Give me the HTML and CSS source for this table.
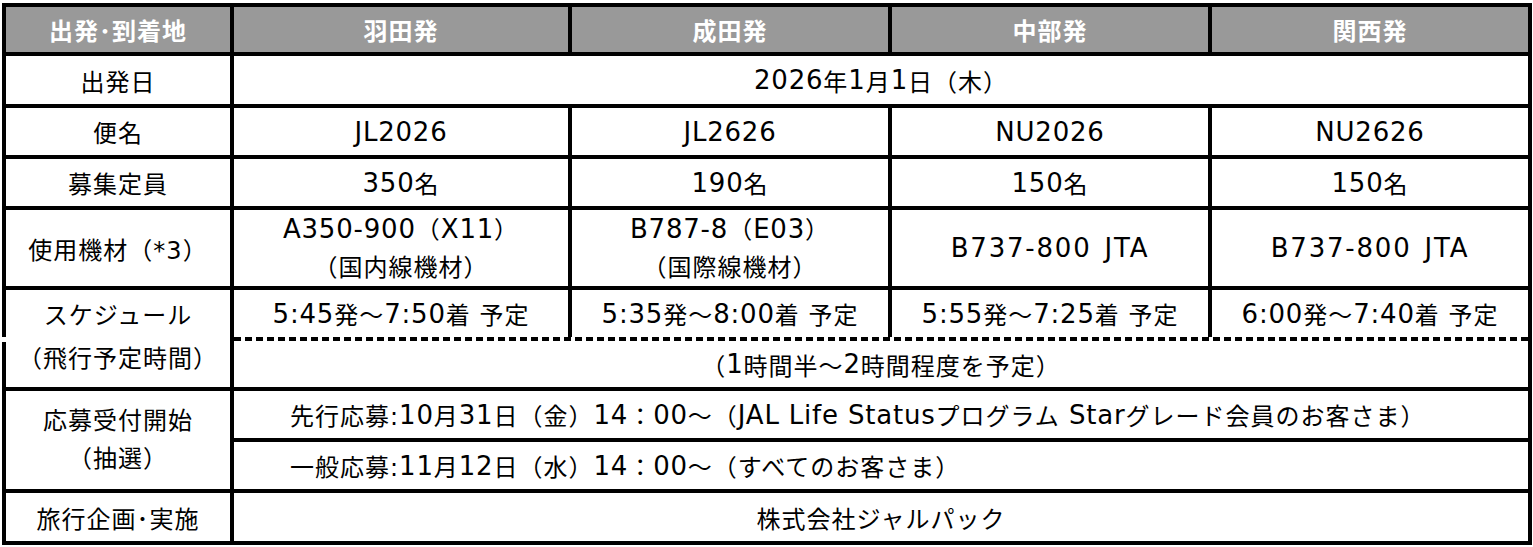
FILE: index.html
```html
<!DOCTYPE html>
<html lang="ja">
<head>
<meta charset="utf-8">
<title>ツアー概要</title>
<link rel="stylesheet" href="styles.css">
</head>
<body>
<div class="sheet">
  <div class="grid">
    <div class="c hd">出発･到着地</div>
    <div class="c hd">羽田発</div>
    <div class="c hd">成田発</div>
    <div class="c hd">中部発</div>
    <div class="c hd">関西発</div>

    <div class="c lbl">出発日</div>
    <div class="c span4"><span class="en">2026</span>年<span class="en">1</span>月<span class="en">1</span>日（木）</div>

    <div class="c lbl">便名</div>
    <div class="c"><span class="en">JL2026</span></div>
    <div class="c"><span class="en">JL2626</span></div>
    <div class="c"><span class="en">NU2026</span></div>
    <div class="c"><span class="en">NU2626</span></div>

    <div class="c lbl">募集定員</div>
    <div class="c"><span class="en">350</span>名</div>
    <div class="c"><span class="en">190</span>名</div>
    <div class="c"><span class="en">150</span>名</div>
    <div class="c"><span class="en">150</span>名</div>

    <div class="c lbl">使用機材（*3）</div>
    <div class="c two"><span><span class="en">A350-900</span>（<span class="en">X11</span>）<br>（国内線機材）</span></div>
    <div class="c two"><span><span class="en">B787-8</span>（<span class="en">E03</span>）<br>（国際線機材）</span></div>
    <div class="c"><span class="en wide">B737-800 JTA</span></div>
    <div class="c"><span class="en wide">B737-800 JTA</span></div>

    <div class="c lbl sched-lbl">
      <span class="half">スケジュール</span>
      <span class="half">（飛行予定時間）</span>
    </div>
    <div class="sched">
      <div class="c"><span class="en">5:45</span>発～<span class="en">7:50</span>着 予定</div>
      <div class="c"><span class="en">5:35</span>発～<span class="en">8:00</span>着 予定</div>
      <div class="c"><span class="en">5:55</span>発～<span class="en">7:25</span>着 予定</div>
      <div class="c"><span class="en">6:00</span>発～<span class="en">7:40</span>着 予定</div>
      <div class="dash"></div>
      <div class="c all">（<span class="en">1</span>時間半～<span class="en">2</span>時間程度を予定）</div>
    </div>

    <div class="c lbl two rows2">応募受付開始<br>（抽選）</div>
    <div class="c span4 left">先行応募:<span class="en">10</span>月<span class="en">31</span>日（金）<span class="en">14</span>：<span class="en">00</span>～（<span class="en">JAL Life Status</span>プログラム<span class="en">&nbsp;Star</span>グレード会員のお客さま）</div>
    <div class="c span4 left">一般応募:<span class="en">11</span>月<span class="en">12</span>日（水）<span class="en">14</span>：<span class="en">00</span>～（すべてのお客さま）</div>

    <div class="c lbl">旅行企画･実施</div>
    <div class="c span4">株式会社ジャルパック</div>
  </div>
</div>
</body>
</html>
```

FILE: styles.css
```css
html, body {
  margin: 0;
  padding: 0;
  background: #fff;
}

.sheet {
  padding: 3px 0 0 2px;
}

.grid {
  display: grid;
  grid-template-columns: 224px 334px 316px 316px 316px;
  grid-template-rows: 45px 48px 47px 47px 76px 97px 47px 47px 48px;
  gap: 4px;
  padding: 4px;
  width: max-content;
  background: #000;
  font-family: "DejaVu Sans", "Noto Sans CJK JP", sans-serif;
  font-size: 24px;
  letter-spacing: 1px;
  color: #000;
}

.c {
  background: #fff;
  display: flex;
  align-items: center;
  justify-content: center;
  text-align: center;
  white-space: nowrap;
}

.en {
  font-size: 26px;
  letter-spacing: 0.8px;
}

.wide {
  letter-spacing: 1.8px;
  word-spacing: 3px;
}

.hd {
  background: #999;
  color: #fff;
  font-weight: bold;
}

.span4 {
  grid-column: 2 / 6;
}

.two {
  line-height: 38px;
}

.rows2 {
  grid-row: span 2;
}

.left {
  justify-content: flex-start;
  padding-left: 56px;
}

.sched-lbl {
  position: relative;
  flex-direction: column;
  justify-content: flex-start;
}

.sched-lbl::before {
  content: "";
  position: absolute;
  left: -4px;
  top: 47px;
  width: 4px;
  height: 5px;
  background: #fff;
}

.half {
  height: 47px;
  line-height: 52px;
}

.half + .half {
  height: 46px;
  line-height: 44px;
}

.sched {
  grid-column: 2 / 6;
  display: grid;
  grid-template-columns: 334px 316px 316px 316px;
  grid-template-rows: 47px 4px 46px;
  column-gap: 4px;
  background: #000;
}

.dash {
  grid-column: 1 / 5;
  background: #fff repeating-linear-gradient(to right, #000 0 7px, #fff 7px 11px);
}

.all {
  grid-column: 1 / 5;
}
```
